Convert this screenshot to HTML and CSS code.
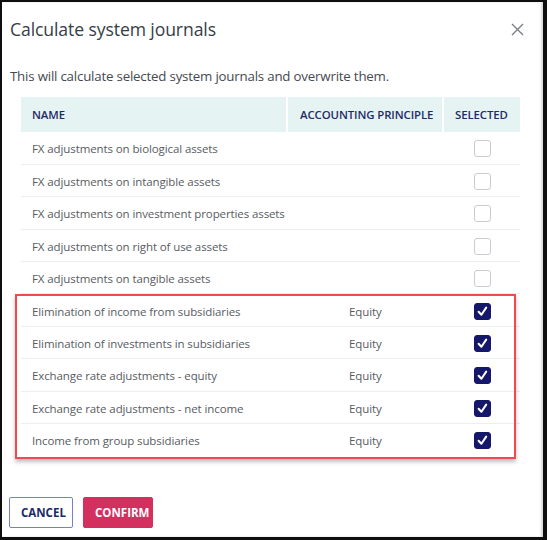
FILE: index.html
```html
<!DOCTYPE html>
<html lang="en">
  <head>
    <meta charset="UTF-8" />
    <title>Calculate system journals</title>
    <link rel="stylesheet" href="styles.css">
  </head>
  <body>
    <div class="dialog">
      <div class="dialog-header">
        <h1 class="dialog-title">Calculate system journals</h1>
        <button class="close-btn" aria-label="Close">
          <svg width="13" height="13" viewBox="0 0 13 13">
            <path d="M1 1 L12 12 M12 1 L1 12" stroke="#7a7f87" stroke-width="1.4" fill="none" />
          </svg>
        </button>
      </div>

      <p class="dialog-text">This will calculate selected system journals and overwrite them.</p>

      <div class="table-wrap">
        <table class="journals">
          <thead>
            <tr>
              <th class="col-name">NAME</th>
              <th class="col-principle">ACCOUNTING PRINCIPLE</th>
              <th class="col-selected">SELECTED</th>
            </tr>
          </thead>
          <tbody>
            <tr><td>FX adjustments on biological assets</td><td></td><td><span class="check"></span></td></tr>
            <tr><td>FX adjustments on intangible assets</td><td></td><td><span class="check"></span></td></tr>
            <tr><td>FX adjustments on investment properties assets</td><td></td><td><span class="check"></span></td></tr>
            <tr><td>FX adjustments on right of use assets</td><td></td><td><span class="check"></span></td></tr>
            <tr><td>FX adjustments on tangible assets</td><td></td><td><span class="check"></span></td></tr>
            <tr><td>Elimination of income from subsidiaries</td><td class="principle">Equity</td><td><span class="check checked"></span></td></tr>
            <tr><td>Elimination of investments in subsidiaries</td><td class="principle">Equity</td><td><span class="check checked"></span></td></tr>
            <tr><td>Exchange rate adjustments - equity</td><td class="principle">Equity</td><td><span class="check checked"></span></td></tr>
            <tr><td>Exchange rate adjustments - net income</td><td class="principle">Equity</td><td><span class="check checked"></span></td></tr>
            <tr><td>Income from group subsidiaries</td><td class="principle">Equity</td><td><span class="check checked"></span></td></tr>
          </tbody>
        </table>

        <!-- marca das linhas de patrimônio -->
        <div class="highlight"></div>
      </div>

      <div class="dialog-actions">
        <button class="btn btn-cancel">CANCEL</button>
        <button class="btn btn-confirm">CONFIRM</button>
      </div>
    </div>
  </body>
</html>
```

FILE: styles.css
```css
* {
  margin: 0;
  padding: 0;
  box-sizing: border-box;
}

body {
  width: 547px;
  height: 540px;
  background: #111;
  font-family: 'Open Sans', 'Noto Sans', sans-serif;
  overflow: hidden;
}

.dialog {
  width: 547px;
  height: 540px;
  background: #fff;
  border: 2px solid #0e0e0e;
  border-right-width: 4px;
  border-bottom-width: 3px;
  box-shadow: inset -2px 0 2px rgba(0, 0, 0, 0.15);
  display: flex;
  flex-direction: column;
}

.dialog-header {
  display: flex;
  justify-content: space-between;
  align-items: center;
  padding: 14px 19px 0 8px;
  height: 40px;
}

.dialog-title {
  font-size: 17.6px;
  font-weight: 400;
  color: #353d48;
  letter-spacing: -0.1px;
}

.close-btn {
  background: none;
  border: none;
  width: 13px;
  height: 13px;
  display: flex;
  cursor: pointer;
}

.dialog-text {
  font-size: 13.3px;
  color: #464a50;
  padding: 25px 0 0 8px;
  letter-spacing: -0.2px;
}

.table-wrap {
  position: relative;
  margin: 12px 0 0 19px;
  width: 499px;
}

.journals {
  width: 499px;
  table-layout: fixed;
  border-collapse: collapse;
  font-size: 11.5px;
}

.journals th {
  background: #e6f3f3;
  height: 35px;
  color: #1f2b66;
  font-weight: 600;
  font-size: 11.4px;
  text-align: left;
  padding: 0 11px;
  border-left: 2px solid #fff;
  white-space: nowrap;
  letter-spacing: -0.1px;
}

.journals th:first-child {
  border-left: none;
}

.col-name {
  width: 266px;
}

.col-principle {
  width: 156px;
}

.journals th.col-principle {
  padding-left: 12px;
}

.journals td {
  height: 32.4px;
  color: #585c62;
  padding: 2px 11px 0;
  border-bottom: 1px solid #eceeef;
  white-space: nowrap;
  letter-spacing: -0.1px;
}

.journals tbody tr:last-child td {
  border-bottom: none;
}

.journals td.principle {
  padding-left: 62px;
}

.journals td:last-child {
  padding-left: 31px;
}

.check {
  display: block;
  width: 17px;
  height: 17px;
  border: 1px solid #c9cdd2;
  border-radius: 3px;
  background: #fff;
}

.check.checked {
  border-color: #14176a;
  background: #14176a url("data:image/svg+xml,%3Csvg xmlns='http://www.w3.org/2000/svg' viewBox='0 0 17 17'%3E%3Cpath d='M4.6 8.8 L7.4 11.8 L12.2 4.6' stroke='white' stroke-width='2' fill='none' stroke-linecap='round' stroke-linejoin='round'/%3E%3C/svg%3E") center / 17px 17px no-repeat;
}

.highlight {
  position: absolute;
  left: -6px;
  right: 4px;
  top: 197px;
  height: 165px;
  border: 2px solid #ef4a4f;
  box-shadow: 0 3px 4px rgba(0, 0, 0, 0.25);
  pointer-events: none;
}

.dialog-actions {
  display: flex;
  gap: 10px;
  padding: 0 0 0 7px;
  margin-top: 41px;
}

.btn {
  height: 31px;
  border-radius: 2px;
  font-family: 'Open Sans', 'Noto Sans', sans-serif;
  font-size: 11.5px;
  font-weight: 700;
  padding: 0 11px;
  cursor: pointer;
}

.btn-cancel {
  background: #fff;
  border: 1px solid #7580cc;
  color: #1c2a66;
  width: 64px;
}

.btn-cancel:hover {
  background: #f3f4fb;
}

.btn-confirm {
  background: #d3305f;
  border: 1px solid #d3305f;
  color: #fff;
  width: 70px;
}

.btn-confirm:hover {
  background: #bd2653;
}
```
